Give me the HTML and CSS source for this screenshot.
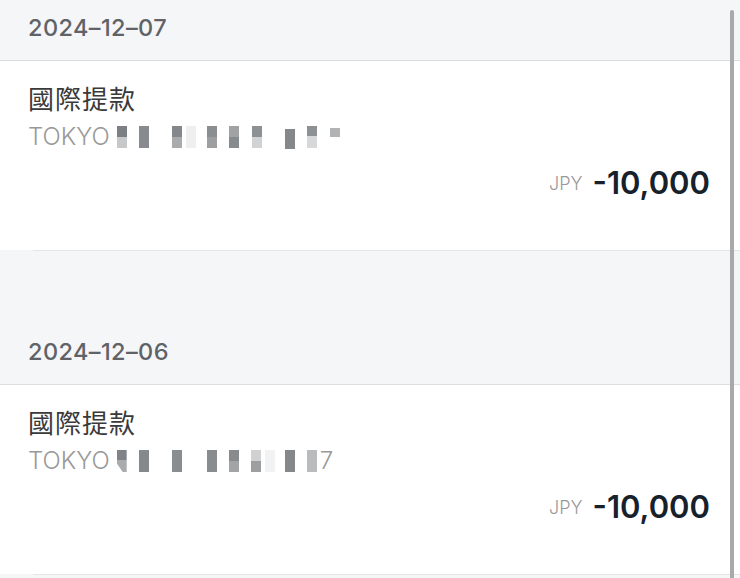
FILE: index.html
```html
<!DOCTYPE html>
<html lang="zh-Hant">
<head>
<meta charset="utf-8">
<title>交易紀錄</title>
<link rel="stylesheet" href="styles.css">
</head>
<body>
<div class="page">
  <section class="group">
    <div class="date">2024–12–07</div>
    <div class="item">
      <div class="title">國際提款</div>
      <div class="sub">
        <span class="loc">TOKYO</span>
        <span class="mosaic">
          <i class="b b1"></i><i class="b b2"></i><i class="b b3 s11"></i><i class="b b4 s13"></i><i class="b b5"></i><i class="b b6 s1"></i><i class="b b7 s11"></i><i class="b b8"></i><i class="b b9 s1"></i>
        </span>
      </div>
      <div class="amount"><span class="cur">JPY</span><span class="val">-10,000</span></div>
    </div>
  </section>
  <section class="group second">
    <div class="date">2024–12–06</div>
    <div class="item">
      <div class="title">國際提款</div>
      <div class="sub">
        <span class="loc">TOKYO</span>
        <span class="mosaic">
          <i class="b c1"></i><i class="b c2"></i><i class="b c3 s11"></i><i class="b c4 s13"></i><i class="b c5"></i><i class="b c6"></i><i class="b c7 s12"></i><i class="b c8"></i>
        </span>
        <span class="tail">7</span>
      </div>
      <div class="amount"><span class="cur">JPY</span><span class="val">-10,000</span></div>
    </div>
  </section>
  <div class="scrollbar"></div>
</div>
</body>
</html>
```

FILE: styles.css
```css
html, body {
  margin: 0;
  padding: 0;
  background: #f5f6f8;
}
body {
  font-family: "Inter", "Noto Sans CJK TC", sans-serif;
  width: 740px;
  height: 578px;
  overflow: hidden;
}
.page {
  position: relative;
  height: 578px;
}
.group.second {
  margin-top: 74px;
}
.date {
  height: 54px;
  padding: 0 0 6px 28px;
  display: flex;
  align-items: center;
  font-size: 23.5px;
  font-weight: 500;
  color: #5f6368;
  border-bottom: 1px solid #dcdddf;
  letter-spacing: 0.4px;
}
.item {
  background: #fff;
  height: 189px;
  box-sizing: border-box;
  padding: 19px 30px 0 28px;
  position: relative;
}
.item::after {
  content: "";
  position: absolute;
  left: 33px;
  right: 0;
  bottom: -1px;
  height: 1px;
  background: #e4e5e6;
}
.title {
  font-family: "Noto Sans CJK TC", sans-serif;
  font-size: 26px;
  line-height: 36px;
  color: #3a3a3a;
  letter-spacing: 1px;
}
.sub {
  margin-top: 4px;
  height: 32px;
  display: flex;
  align-items: center;
  font-size: 24px;
  font-weight: 300;
  color: #999999;
}
.mosaic {
  display: flex;
  align-items: flex-start;
  gap: 12px;
  margin-left: 7px;
  height: 22px;
  margin-top: 2px;
}
.b {
  display: block;
  width: 10px;
  height: 22px;
}
.s1 { margin-left: 1px; }
.s11 { margin-left: 11px; }
.s12 { margin-left: 12px; }
.s13 { margin-left: 13px; }
.b1 { background: linear-gradient(#7c8084 50%, #c6c8ca 50%); }
.b2 { background: #878a8e; }
.b3 { background: linear-gradient(#84878b 50%, #a9abad 50%); box-shadow: 14px 0 0 0 #efefef; }
.b4 { background: linear-gradient(#8b8e91 50%, #9c9ea0 50%); }
.b5 { background: linear-gradient(#a0a2a4 50%, #888b8e 50%); }
.b6 { background: linear-gradient(#8e9194 50%, #d0d2d3 50%); }
.b7 { background: #85888b; margin-top: 3px; height: 20px; }
.b8 { background: linear-gradient(#8e9194 45%, #d7d8d9 45%); }
.b9 { background: #b1b3b5; height: 9px; margin-top: 2px; }
.c1 { background: linear-gradient(#7f8286 45%, #a9abad 45%); clip-path: polygon(0 0, 100% 0, 100% 100%, 60% 100%, 0 60%); }
.c2 { background: #86898c; }
.c3 { background: #8a8d90; }
.c4 { background: #898c8f; }
.c5 { background: linear-gradient(#888b8e 50%, #a2a4a6 50%); }
.c6 { background: linear-gradient(#cfd1d2 50%, #9c9ea0 50%); box-shadow: 14px 0 0 0 #f2f2f2; }
.c7 { background: #85888b; }
.c8 { background: #b9bbbc; }
.tail {
  margin-left: 3px;
}
.amount {
  margin-top: 10px;
  height: 40px;
  display: flex;
  align-items: center;
  justify-content: flex-end;
  gap: 10px;
}
.cur {
  font-size: 18px;
  font-weight: 300;
  color: #999999;
  margin-top: 3px;
}
.val {
  font-size: 31px;
  font-weight: 600;
  color: #17212c;
}
.scrollbar {
  position: absolute;
  left: 730px;
  top: 10px;
  width: 4px;
  bottom: 0;
  background: #a9a9a9;
  border-radius: 2px 2px 0 0;
}
```
